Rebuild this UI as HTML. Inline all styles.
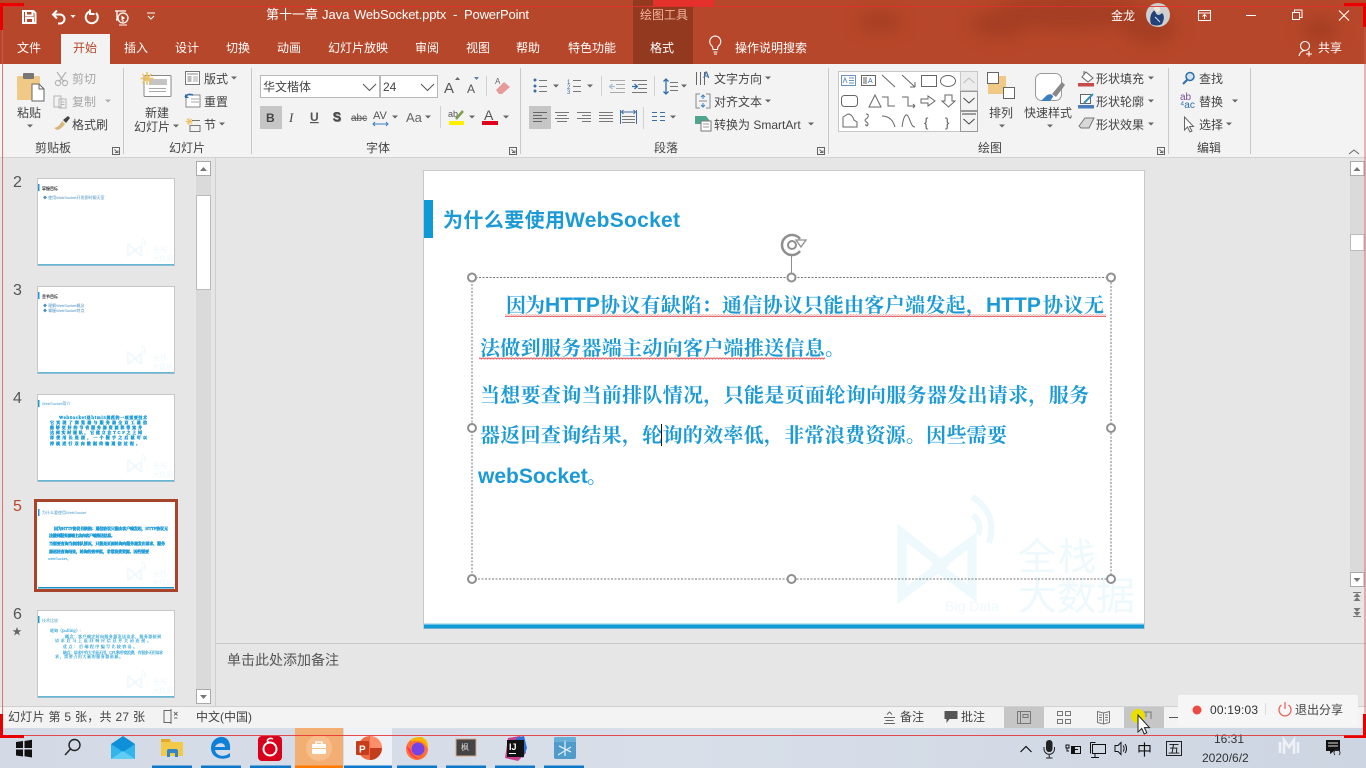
<!DOCTYPE html>
<html><head><meta charset="utf-8"><title>PowerPoint</title>
<style>
html,body{margin:0;padding:0;width:1366px;height:768px;overflow:hidden;background:#e6e6e6}
svg{display:block;filter:blur(.3px)}
text{font-family:"Liberation Sans","Noto Sans CJK SC",sans-serif;font-size:12px;fill:#444}
.w{fill:#fff}.g{fill:#a6a6a6}.d{fill:#444}
.ico{fill:none;stroke:#666;stroke-width:1}
.wi{fill:none;stroke:#fff;stroke-width:2}
.k{font-family:"Liberation Sans","Noto Serif CJK SC",serif;font-weight:700;font-size:20px;fill:#1b9ad6}
.b{font-weight:700;font-size:21px;fill:#1b9ad6}
.tk{font-family:"Noto Serif CJK SC",serif;font-size:4px;font-weight:700;fill:#1b9ad6;stroke:#1b9ad6;stroke-width:.35}
.tl{font-family:"Noto Serif CJK SC",serif;font-size:4px;fill:#1b9ad6;stroke:#1b9ad6;stroke-width:.12}
.num{font-size:16px;fill:#555}
</style></head><body>
<svg width="1366" height="768" viewBox="0 0 1366 768" xmlns="http://www.w3.org/2000/svg">
<defs>
<path id="ar" d="M-3-1.5h6L0 1.5z" fill="#666"/>
<filter id="bl" x="-30%" y="-60%" width="160%" height="220%"><feGaussianBlur stdDeviation="8"/></filter>
<pattern id="wv" width="3" height="3" patternUnits="userSpaceOnUse"><path d="M0 2.200L.75 .8 1.500 2.200 2.250 .8 3 2.200" fill="none" stroke="#e2484f" stroke-width=".6"/></pattern>
<linearGradient id="tb" x1="0" y1="0" x2="1" y2="0"><stop offset="0" stop-color="#d3dae6"/><stop offset=".5" stop-color="#d8dfe9"/><stop offset="1" stop-color="#cdd5e2"/></linearGradient>
<g id="lg"><path d="M5 6L45 38 5 68z" fill="none" stroke="#eef9fd" stroke-width="9"/><path d="M75 14V66L40 40z" fill="none" stroke="#eef9fd" stroke-width="9"/><path d="M75-30C92-20 98-5 92 16M76-12c6 5 8 12 5 20" fill="none" stroke="#eef9fd" stroke-width="6"/></g>
</defs>

<!-- backgrounds -->
<rect width="1366" height="768" fill="#e6e6e6"/>
<rect width="1366" height="64" fill="#b7472a"/>
<g filter="url(#bl)" fill="#97391f" opacity=".55">
<ellipse cx="1070" cy="12" rx="75" ry="18"/><ellipse cx="1000" cy="24" rx="30" ry="14"/><ellipse cx="1150" cy="28" rx="28" ry="16"/><ellipse cx="1320" cy="30" rx="18" ry="13"/><ellipse cx="880" cy="22" rx="22" ry="10"/>
</g>
<rect x="633" width="60" height="64" fill="#93391f"/>
<rect y="64" width="1366" height="93" fill="#f3f3f3"/>
<rect y="157" width="1366" height="1" fill="#d2d2d2"/>
<rect x="61" y="34" width="49" height="31" fill="#f3f3f3"/>

<!-- QAT -->
<path class="wi" d="M23 11h10.500l2 2v10H23zM26 11v4.500h6.500V11M26 23v-5h7v5"/>
<path class="wi" d="M57 10.500l-4 4 4 4M53 14.500h7a4.500 4.500 0 0 1 0 9h-2"/>
<path d="M70.500 15h5l-2.500 3z" fill="#fff"/>
<path class="wi" d="M90 11.500a6 6 0 1 0 6 1.500M90 9.500v4.500h4.500"/>
<path d="M115 11h11M117 11v9h-1M124 21h-2" fill="none" stroke="#fff" stroke-width="1.300"/><circle cx="123" cy="18" r="5" fill="none" stroke="#fff" stroke-width="1.300"/><path d="M121.500 15.500l3.500 2.500-3.500 2.500z" fill="#fff"/><path d="M119 25h8" stroke="#fff"/>
<path d="M147 13h8M148 16l3 3 3-3" fill="none" stroke="#fff"/>
<text class="w" x="266" y="19" style="font-size:13px">第十一章</text>
<text class="w" x="322" y="19" style="font-size:13px">Java</text>
<text class="w" x="354" y="19" style="font-size:13px" textLength="175" xml:space="preserve">WebSocket.pptx  -  PowerPoint</text>
<text x="640" y="19" style="font-size:12px;fill:#f2b49d">绘图工具</text>

<!-- Tabs -->
<g class="tabs">
<text class="w" x="17" y="52">文件</text><text x="73" y="52" style="fill:#b7472a">开始</text>
<text class="w" x="124" y="52">插入</text><text class="w" x="175" y="52">设计</text><text class="w" x="226" y="52">切换</text><text class="w" x="277" y="52">动画</text>
<text class="w" x="328" y="52">幻灯片放映</text><text class="w" x="415" y="52">审阅</text><text class="w" x="466" y="52">视图</text><text class="w" x="516" y="52">帮助</text>
<text class="w" x="568" y="52">特色功能</text><text class="w" x="650" y="52">格式</text><text class="w" x="735" y="52">操作说明搜索</text>
<text class="w" x="1318" y="52">共享</text>
</g>
<path d="M712 46a5.500 5.500 0 1 1 6.500 0c-.8.8-1 2-1 3.500h-4.500c0-1.500-.3-2.700-1-3.500zM713.500 52h4M714 54h3" fill="none" stroke="#fff" stroke-width="1.100"/>
<circle cx="1305" cy="46" r="4.500" fill="none" stroke="#fff" stroke-width="1.100"/><path d="M1299 56c1-4 3-5.500 6-5.500M1309 51v5.500M1306 54h6" fill="none" stroke="#fff" stroke-width="1.100"/>

<!-- Title right -->
<text class="w" x="1111" y="20">金龙</text>
<circle cx="1158" cy="15" r="12" fill="#cfcfcf"/><path d="M1151 24c-2-6 0-12 4-14 1 6 4 6 7 3 3 3 2 7 0 11-3 2-8 2-11 0z" fill="#21427a"/><circle cx="1157" cy="9" r="3" fill="#efe6d8"/><path d="M1155 17l5 5" stroke="#dfe6ef"/>
<rect x="1198.500" y="10.500" width="12" height="10" fill="none" stroke="#fff"/><path d="M1198.500 13h12M1204.500 19v-4M1202.500 16.500l2-2 2 2" fill="none" stroke="#fff"/>
<path d="M1246 15.500h10" stroke="#fff"/>
<path d="M1292.500 12.500h7v7h-7zM1294.500 12.500v-2.500h7.500v7.500h-2.500" fill="none" stroke="#fff"/>
<path d="M1339 10.500l10 10M1349 10.500l-10 10" stroke="#fff" stroke-width="1.100"/>

<!-- ribbon separators -->
<path d="M123.500 68v86M251.500 68v86M520.500 68v86M828.500 68v86M1168.500 68v86M1250.500 68v86" stroke="#c8c8c8"/>
<!-- group labels -->
<text x="35" y="152">剪贴板</text><text x="169" y="152">幻灯片</text><text x="366" y="152">字体</text><text x="654" y="152">段落</text><text x="978" y="152">绘图</text><text x="1197" y="152">编辑</text>
<path class="ico" d="M112.500 147.500h7v7h-7zM114.500 149.500l3 3M115 152.500h3v-2"/><path class="ico" d="M509.500 147.500h7v7h-7zM511.500 149.500l3 3M512 152.500h3v-2"/><path class="ico" d="M817.500 147.500h7v7h-7zM819.500 149.500l3 3M820 152.500h3v-2"/><path class="ico" d="M1157.500 147.500h7v7h-7zM1159.500 149.500l3 3M1160 152.500h3v-2"/>
<path d="M1349 154l5-4 5 4" fill="none" stroke="#666"/>

<!-- Clipboard -->
<rect x="17" y="76" width="23" height="24" rx="1" fill="#f0c987"/><rect x="23" y="73" width="11" height="6" rx="1" fill="#777"/>
<path d="M32 84h7l5 5v12H32z" fill="#fff" stroke="#666"/><path d="M39 84v5h5" fill="none" stroke="#666"/>
<text x="17" y="117" class="d">粘贴</text><use href="#ar" x="30" y="126"/>
<path d="M57 72l7 10M66 72l-7 10" stroke="#b5b5b5" stroke-width="1.300"/><circle cx="58" cy="83" r="2.600" fill="none" stroke="#b5b5b5" stroke-width="1.200"/><circle cx="65" cy="83" r="2.600" fill="none" stroke="#b5b5b5" stroke-width="1.200"/>
<text class="g" x="72" y="83">剪切</text>
<path d="M54 96h7v11h-7zM59 99h7v9h-7z" fill="#f3f3f3" stroke="#b5b5b5"/><path d="M61 102h3.500M61 104.500h3.500" stroke="#b5b5b5"/>
<text class="g" x="72" y="106">复制</text><use href="#ar" x="108" y="101" style="opacity:.5"/>
<path d="M54 128c4-1 6-3 8-7l3 3c-3 4-6 6-8 6z" fill="#d8b777"/><path d="M63 120l5-4 2 2-4 5z" fill="#444"/>
<text class="d" x="72" y="129">格式刷</text>

<!-- Slides group -->
<rect x="144" y="75.500" width="27" height="21" rx="1" fill="#fff" stroke="#888"/><rect x="149" y="79" width="18" height="6" fill="#c4c4c4"/><path d="M149 88.500h17M149 91.500h17" stroke="#aaa"/>
<path d="M147 72v13M140.500 78.500h13M142.500 74l9 9M151.500 74l-9 9" stroke="#f0c060" stroke-width="1.500"/>
<text class="d" x="145" y="117">新建</text><text class="d" x="134" y="131">幻灯片</text><use href="#ar" x="176" y="126"/>
<rect x="185.500" y="71.500" width="14" height="13" fill="#fff" stroke="#777"/><path d="M187 74h11" stroke="#888"/><rect x="187.500" y="76" width="4" height="6" fill="#bbb"/><path d="M193 77h5M193 79h5M193 81h5" stroke="#aaa"/>
<text class="d" x="204" y="83">版式</text><use href="#ar" x="234" y="78"/>
<rect x="186" y="95" width="14" height="12" fill="#fff" stroke="#888"/><path d="M191 99h8M191 102h8" stroke="#aaa"/><path d="M185 97c2-3 5-3 8-2" fill="none" stroke="#2f6ea8" stroke-width="1.600"/><path d="M185 94v4h4z" fill="#2f6ea8"/>
<text class="d" x="204" y="106">重置</text>
<path d="M189 118v7M185.500 121.500h7M187 119l5 5M192 119l-5 5" stroke="#f0c060" stroke-width="1.100"/><path d="M192 120.500h8M190 125.500h10v6h-10z" fill="none" stroke="#777"/>
<text class="d" x="204" y="129">节</text><use href="#ar" x="222" y="124"/>

<!-- Font -->
<rect x="260.500" y="75.500" width="119" height="22" fill="#fff" stroke="#b8b8b8"/><rect x="380.500" y="75.500" width="57" height="22" fill="#fff" stroke="#b8b8b8"/>
<text class="d" x="263" y="91">华文楷体</text><text class="d" x="383" y="91">24</text>
<path d="M363 84l6.500 6.500 6.500-6.500M421 84l6.500 6.500 6.500-6.500" fill="none" stroke="#555"/>
<text x="444" y="93" style="font-size:15px;fill:#555">A</text><path d="M455 80h5l-2.500-3z" fill="#666"/>
<text x="467" y="93" style="font-size:12px;fill:#555">A</text><path d="M474 77h5l-2.500 3z" fill="#5a7fa6"/>
<path d="M486.500 76v20" stroke="#d0d0d0"/>
<path d="M496 90l8-8 6 5-8 7h-3z" fill="#e79a9a"/><text x="495" y="84" style="font-size:8px;fill:#666">A</text>
<rect x="260" y="106" width="22" height="23" fill="#c6c6c6"/>
<text x="266" y="122" style="font-size:12px;font-weight:700;fill:#444">B</text>
<text x="289" y="122" style="font-size:13px;font-style:italic;font-family:'Liberation Serif',serif;fill:#444">I</text>
<text x="310" y="121" style="font-size:12px;font-weight:700;fill:#555;text-decoration:underline">U</text>
<text x="333" y="122" style="font-size:13px;font-weight:700;fill:#777">S</text><text x="332.500" y="121" style="font-size:13px;font-weight:700;fill:#444">S</text>
<text x="351" y="121" style="font-size:10px;fill:#555;text-decoration:line-through">abc</text>
<text x="373" y="119" style="font-size:11px;fill:#555">AV</text><path d="M373 124h15M375 122l-2 2 2 2M386 122l2 2-2 2" fill="none" stroke="#3a7fc0"/><use href="#ar" x="395" y="117"/>
<text x="406" y="122" style="font-size:13px;fill:#666">Aa</text><use href="#ar" x="428" y="117"/>
<path d="M440.500 106v22" stroke="#d0d0d0"/>
<text x="448" y="117" style="font-size:9px;fill:#555">ab</text><path d="M456 119l7-8" stroke="#7fa04f" stroke-width="2.500"/><rect x="449" y="121" width="15" height="4" fill="#fff000"/><use href="#ar" x="472" y="117"/>
<text x="484" y="120" style="font-size:14px;fill:#555">A</text><rect x="482" y="121" width="16" height="4" fill="#e0001b"/><use href="#ar" x="506" y="117"/>

<!-- Paragraph -->
<g fill="#3a6ea5"><circle cx="535" cy="80" r="1.500"/><circle cx="535" cy="86" r="1.500"/><circle cx="535" cy="91" r="1.500"/></g>
<path d="M539 80.500h8M539 86.500h8M539 91.500h8M573 80.500h8M573 86.500h8M573 91.500h8" stroke="#777"/><use href="#ar" x="556" y="86"/><use href="#ar" x="590" y="86"/>
<text x="567" y="84" style="font-size:6px;fill:#3a6ea5">1</text><text x="567" y="89" style="font-size:6px;fill:#3a6ea5">2</text><text x="567" y="94" style="font-size:6px;fill:#3a6ea5">3</text>
<path d="M601.500 76v20M654.500 76v20M643.500 107v22" stroke="#d0d0d0"/>
<path d="M610 80.500h15M616 84.500h9M616 88.500h9M610 92.500h15" stroke="#aaa"/><path d="M615 86.500h-5M612.500 84l-3 2.500 3 2.500" fill="none" stroke="#a8bdd3" stroke-width="1.200"/>
<path d="M632 80.500h15M638 84.500h9M638 88.500h9M632 92.500h15" stroke="#777"/><path d="M632 86.500h5M634.500 84l3 2.500-3 2.500" fill="none" stroke="#2f6ea8" stroke-width="1.200"/>
<path d="M666 79v15M663.500 81.500l2.500-2.500 2.500 2.500M663.500 91.500l2.500 2.500 2.500-2.500" fill="none" stroke="#2f6ea8" stroke-width="1.300"/><path d="M670 82.500h8M670 86.500h8M670 90.500h8" stroke="#777"/><use href="#ar" x="684" y="86"/>
<path d="M696.500 72v13M700.500 72v13M704.500 72v13" stroke="#666"/><text x="703" y="78" style="font-size:9px;font-weight:700;fill:#3a6ea5">A</text>
<text class="d" x="714" y="83">文字方向</text><use href="#ar" x="768" y="78"/>
<path d="M700 94h-4v14h4M706 94h4v14h-4" fill="none" stroke="#888"/><path d="M703 95v4M701 97l2-2 2 2M703 107v-4M701 105l2 2 2-2" fill="none" stroke="#3a7fc0"/><path d="M699 101h8" stroke="#888"/>
<text class="d" x="714" y="106">对齐文本</text><use href="#ar" x="768" y="101"/>
<path d="M695 116h11l4 5h-8v3h-7z" fill="#4fa58e"/><rect x="701" y="121" width="10" height="10" fill="#fff" stroke="#777"/><path d="M703 124h6M703 127h6" stroke="#999"/>
<text class="d" x="714" y="129">转换为 SmartArt</text><use href="#ar" x="811" y="124"/>
<rect x="529" y="106" width="22" height="23" fill="#c6c6c6"/>
<path d="M533 112.500h14M533 115.500h9M533 118.500h14M533 121.500h9" stroke="#666"/>
<path d="M555 112.500h14M557 115.500h10M555 118.500h14M557 121.500h10" stroke="#777"/>
<path d="M577 112.500h14M582 115.500h9M577 118.500h14M582 121.500h9" stroke="#777"/>
<path d="M599 112.500h14M599 115.500h14M599 118.500h14M599 121.500h14" stroke="#777"/>
<path d="M620.500 110v14M636.500 110v14" stroke="#3a6ea5"/><path d="M622 112h13M623.500 110l-2 2 2 2M633.500 110l2 2-2 2" fill="none" stroke="#3a6ea5"/><path d="M622 116.500h13M622 119.500h13M622 122.500h13" stroke="#777"/>
<path d="M652 112.500h5M660 112.500h5M652 116.500h5M660 116.500h5M652 120.500h5M660 120.500h5" stroke="#3a6ea5"/><use href="#ar" x="673" y="117"/>

<!-- Shapes gallery -->
<rect x="838.500" y="71.500" width="139" height="60" fill="#fff" stroke="#c8c8c8"/>
<g fill="none" stroke="#666">
<rect x="841.500" y="75.500" width="14" height="10" stroke="#6a93c0"/><path d="M849 78h5M849 80.500h5M849 83h5M843 83l2-5 2 5" stroke="#6a93c0"/>
<rect x="861.500" y="75.500" width="14" height="10"/><path d="M864 77v7M866 77v7"/><text x="868" y="83" style="font-size:7px;fill:#3a6ea5;stroke:none">A</text>
<path d="M882 75l13 12M902 75l13 12M915 87v-5M915 87h-5"/>
<rect x="921.500" y="75.500" width="15" height="11"/><ellipse cx="948" cy="81" rx="7.500" ry="5.500"/>
<rect x="841.500" y="95.500" width="16" height="11" rx="3"/><path d="M869 107l6-12 6 12z"/>
<path d="M882 97h6v9h7M902 97h6v9h7M915 106l-2-2M915 106l-2 2"/>
<path d="M921 99h7v-3l7 5-7 5v-3h-7z"/><path d="M945 95h7v6h3l-6.500 6-6.500-6h3z"/>
<path d="M843 127v-10l5-3c3 0 5 3 6 6l3 2v5z"/><path d="M866 114c3 0 3 3 0 5s2 3 2 5-3 3-2 0"/>
<path d="M882 116c7 0 11 4 13 11"/><path d="M902 127c2-14 5-14 7-9s3 9 6 9"/>
</g>
<text x="924" y="127" style="font-size:13px;fill:#555">{</text><text x="945" y="127" style="font-size:13px;fill:#555">}</text>
<rect x="960.500" y="71.500" width="17" height="19" fill="#ececec" stroke="#c8c8c8"/><path d="M963.500 83l5.500-5 5.500 5" fill="none" stroke="#bbb"/>
<rect x="960.500" y="91.500" width="17" height="19" fill="#f3f3f3" stroke="#999"/><path d="M963.500 98l5.500 5 5.500-5" fill="none" stroke="#444"/>
<rect x="960.500" y="111.500" width="17" height="20" fill="#f3f3f3" stroke="#999"/><path d="M962 114h14" stroke="#444"/><path d="M963.500 119l5.500 5 5.500-5" fill="none" stroke="#444"/>

<!-- Arrange etc. -->
<rect x="988" y="76" width="18" height="18" fill="#f0c987"/><rect x="987.500" y="72.500" width="11" height="11" fill="#fff" stroke="#666"/><rect x="1003.500" y="87.500" width="11" height="11" fill="#fff" stroke="#666"/>
<text class="d" x="989" y="117">排列</text><use href="#ar" x="1002" y="126"/>
<rect x="1035.500" y="73.500" width="26" height="27" rx="6" fill="#fff" stroke="#999"/>
<path d="M1041 101l5-5c3-3 7-2 7 1l-3 4z" fill="#3a7fc0"/><path d="M1052 94l10-12 3 3-9 12z" fill="#888"/>
<text class="d" x="1024" y="117">快速样式</text><use href="#ar" x="1050" y="126"/>
<rect x="1078" y="83" width="16" height="3.500" fill="#c74b4b"/><path d="M1086 72l7 6-5 4-6-5z" fill="#fff" stroke="#666"/><path d="M1084 74v-3" stroke="#666"/>
<text class="d" x="1096" y="83">形状填充</text><use href="#ar" x="1151" y="78"/>
<rect x="1078" y="105" width="16" height="3.500" fill="#4a7ebb"/><rect x="1080.500" y="94.500" width="10" height="9" fill="#fff" stroke="#666"/><path d="M1084 103l9-9" stroke="#3a8fc0" stroke-width="2"/>
<text class="d" x="1096" y="106">形状轮廓</text><use href="#ar" x="1151" y="101"/>
<path d="M1079 126l6-8h9l-5 10h-8z" fill="#d8d8d8" stroke="#777"/>
<text class="d" x="1096" y="129">形状效果</text><use href="#ar" x="1151" y="124"/>
<!-- Editing -->
<circle cx="1190" cy="76.500" r="4" fill="#cfe3f5" stroke="#2f6ea8" stroke-width="1.500"/><path d="M1187 80l-4 4" stroke="#2f6ea8" stroke-width="2"/>
<text class="d" x="1199" y="83">查找</text>
<text x="1180" y="100" style="font-size:10px;fill:#7a4fa0">ab</text><text x="1180" y="108" style="font-size:10px;fill:#2f6ea8">⁴ac</text>
<text class="d" x="1199" y="106">替换</text><use href="#ar" x="1235" y="101"/>
<path d="M1184.500 117v13l3-3 2.500 5 2-1-2.500-4.500h4z" fill="#fff" stroke="#666"/>
<text class="d" x="1199" y="129">选择</text><use href="#ar" x="1229" y="124"/>

<!-- Left pane -->
<path d="M215.500 158v549" stroke="#cfcfcf"/>
<rect x="196" y="161" width="15" height="543" fill="#dadada"/>
<rect x="196.500" y="161.500" width="14" height="14" fill="#fff" stroke="#aaa"/><path d="M200 171h7l-3.500-4z" fill="#777"/>
<rect x="196.500" y="195.500" width="14" height="94" fill="#fff" stroke="#bbb"/>
<rect x="196.500" y="689.500" width="14" height="14" fill="#fff" stroke="#aaa"/><path d="M200 695h7l-3.500 4z" fill="#777"/>

<text class="num" x="13" y="187">2</text><text class="num" x="13" y="295">3</text><text class="num" x="13" y="403">4</text><text class="num" x="13" y="511" style="fill:#b7472a">5</text><text class="num" x="13" y="619">6</text>
<path d="M17 627l1.200 3.200h3.300l-2.700 2 1 3.300-2.800-2-2.800 2 1-3.300-2.700-2h3.300z" fill="#666"/>

<!-- Thumb 2 -->
<rect x="37.500" y="178.500" width="137" height="87" fill="#fff" stroke="#c6c6c6"/><rect x="38" y="184" width="1.500" height="7" fill="#1b9ad6"/><rect x="38" y="264" width="136" height="1.500" fill="#63b6d6"/>
<text x="42" y="190" style="font-size:4px;font-weight:700;fill:#333">掌握目标</text><text x="43" y="199" style="font-size:4px;fill:#4a90c0">◆ 使用WebSocket开发即时聊天室</text>
<use href="#lg" transform="translate(127,243) scale(.19)"/><text x="153" y="252" style="font-size:7px;fill:#eef9fd">全栈</text><text x="152" y="261" style="font-size:7px;fill:#eef9fd">大数据</text>
<!-- Thumb 3 -->
<rect x="37.500" y="286.500" width="137" height="87" fill="#fff" stroke="#c6c6c6"/><rect x="38" y="292" width="1.500" height="7" fill="#1b9ad6"/><rect x="38" y="372" width="136" height="1.500" fill="#63b6d6"/>
<text x="42" y="298" style="font-size:4px;font-weight:700;fill:#333">章节目标</text><text x="43" y="307" style="font-size:4px;fill:#4a90c0">◆ 理解WebSocket概念</text><text x="43" y="312" style="font-size:4px;fill:#4a90c0">◆ 掌握WebSocket特点</text>
<use href="#lg" transform="translate(127,351) scale(.19)"/><text x="153" y="360" style="font-size:7px;fill:#eef9fd">全栈</text><text x="152" y="369" style="font-size:7px;fill:#eef9fd">大数据</text>
<!-- Thumb 4 -->
<rect x="37.500" y="394.500" width="137" height="87" fill="#fff" stroke="#c6c6c6"/><rect x="38" y="400" width="1.500" height="7" fill="#1b9ad6"/><rect x="38" y="480" width="136" height="1.500" fill="#63b6d6"/>
<text x="42" y="405" style="font-size:4px;fill:#4a9ac8">WebSocket简介</text>
<text class="tk" x="59" y="419" textLength="88">WebSocket是html5规范的一项重要技术</text>
<text class="tk" x="50" y="424" textLength="97">它实现了浏览器与服务器全双工通信</text>
<text class="tk" x="50" y="429" textLength="92">能够更好的节省服务器资源和带宽并</text>
<text class="tk" x="50" y="434" textLength="92">达到实时通讯，它建立在TCP之上同</text>
<text class="tk" x="50" y="439" textLength="97">样使用长连接，一个握手之后就可以</text>
<text class="tk" x="50" y="445" textLength="90">持续进行双向数据传输通信过程。</text>
<use href="#lg" transform="translate(127,459) scale(.19)"/><text x="153" y="468" style="font-size:7px;fill:#eef9fd">全栈</text><text x="152" y="477" style="font-size:7px;fill:#eef9fd">大数据</text>
<!-- Thumb 5 -->
<rect x="35.500" y="500.500" width="141" height="90" fill="#fff" stroke="#a8442a" stroke-width="3"/><rect x="38" y="509" width="1.500" height="7" fill="#1b9ad6"/><rect x="38" y="587" width="136" height="1.500" fill="#1b8ec6"/>
<text x="42" y="514" style="font-size:4px;fill:#4a9ac8">为什么要使用WebSocket</text>
<text class="tk" x="54" y="530" textLength="114">因为HTTP协议有缺陷：通信协议只能由客户端发起，HTTP协议无</text>
<text class="tk" x="49" y="537" textLength="66">法做到服务器端主动向客户端推送信息。</text>
<text class="tk" x="49" y="545" textLength="116">当想要查询当前排队情况，只能是页面轮询向服务器发出请求，服务</text>
<text class="tk" x="49" y="553" textLength="100">器返回查询结果，轮询的效率低，非常浪费资源。因些需要</text>
<text x="48" y="560" style="font-size:4px;fill:#1b9ad6" textLength="23">webSocket。</text>
<use href="#lg" transform="translate(127,567) scale(.19)"/><text x="153" y="576" style="font-size:7px;fill:#eef9fd">全栈</text><text x="152" y="585" style="font-size:7px;fill:#eef9fd">大数据</text>
<!-- Thumb 6 -->
<rect x="37.500" y="610.500" width="137" height="87" fill="#fff" stroke="#c6c6c6"/><rect x="38" y="616" width="1.500" height="7" fill="#1b9ad6"/><rect x="38" y="696" width="136" height="1.500" fill="#63b6d6"/>
<text x="42" y="622" style="font-size:4px;fill:#4a9ac8">技术比较</text>
<text class="tl" x="50" y="632">轮询（polling）：</text>
<text class="tl" x="65" y="638" textLength="96">概念：客户端定时向服务器发送请求，服务器接到</text>
<text class="tl" x="55" y="642" textLength="96">请求后马上返回响应信息并关闭连接。</text>
<text class="tl" x="63" y="648" textLength="74">优点：后端程序编写比较容易。</text>
<text class="tl" x="63" y="654" textLength="100">缺点：请求中有大半是无用，CPU和带宽浪费，有很多无用请求</text>
<text class="tl" x="55" y="658" textLength="68">求，需要占用大量的服务器资源。</text>
<use href="#lg" transform="translate(127,675) scale(.19)"/><text x="153" y="684" style="font-size:7px;fill:#eef9fd">全栈</text><text x="152" y="693" style="font-size:7px;fill:#eef9fd">大数据</text>

<!-- Slide -->
<rect x="423.500" y="170.500" width="721" height="458" fill="#fff" stroke="#c9c9c9"/>
<rect x="424" y="200" width="9" height="38" fill="#0f9ad5"/>
<rect x="424" y="623" width="720" height="1.500" fill="#bfe4f5"/><rect x="424" y="624.500" width="720" height="4" fill="#0f9ad5"/>
<text x="443" y="227" textLength="122" style="font-size:20px;font-weight:700;fill:#1b9ad6">为什么要使用</text>
<text x="565" y="227" textLength="115" style="font-size:21px;font-weight:700;fill:#1b9ad6">WebSocket</text>

<!-- watermark -->
<use href="#lg" transform="translate(897,527)"/>
<text x="1018" y="570" style="font-size:38px;fill:#eef9fd" textLength="78">全栈</text>
<text x="1018" y="610" style="font-size:39px;fill:#eef9fd" textLength="117">大数据</text>
<text x="945" y="611" style="font-size:14px;fill:#eef9fd">Big Data</text>

<!-- body text -->
<text class="k" x="506" y="312" textLength="39">因为</text><text class="b" x="545" y="312">HTTP</text>
<text class="k" x="600" y="312" textLength="386">协议有缺陷：通信协议只能由客户端发起，</text><text class="b" x="986" y="312">HTTP</text><text class="k" x="1043" y="312" textLength="61">协议无</text>
<text class="k" x="480" y="355" textLength="365">法做到服务器端主动向客户端推送信息。</text>
<text class="k" x="480" y="402" textLength="609">当想要查询当前排队情况，只能是页面轮询向服务器发出请求，服务</text>
<text class="k" x="480" y="442" textLength="527">器返回查询结果，轮询的效率低，非常浪费资源。因些需要</text>
<text class="b" x="478" y="483">webSocket</text><text class="k" x="587" y="483">。</text>
<rect x="505" y="314" width="601" height="3" fill="url(#wv)"/><rect x="479" y="357" width="346" height="3" fill="url(#wv)"/>
<path d="M661.500 424v22" stroke="#111"/>

<!-- selection -->
<rect x="472" y="277.500" width="639" height="301.500" fill="none" stroke="#777" stroke-dasharray="2 1.500"/>
<path d="M791.500 256v21" stroke="#8f8f8f"/>
<g fill="#fff" stroke="#8f8f8f" stroke-width="2">
<circle cx="472" cy="277.500" r="4"/><circle cx="791.500" cy="277.500" r="4"/><circle cx="1111" cy="277.500" r="4"/>
<circle cx="472" cy="428" r="4"/><circle cx="1111" cy="428" r="4"/>
<circle cx="472" cy="579" r="4"/><circle cx="791.500" cy="579" r="4"/><circle cx="1111" cy="579" r="4"/>
</g>
<path d="M800 239a10 10 0 1 0 0 12" fill="none" stroke="#8f8f8f" stroke-width="2.500"/><circle cx="792" cy="245" r="4" fill="none" stroke="#8f8f8f" stroke-width="2"/><path d="M796 240h10l-5 7z" fill="#fff" stroke="#8f8f8f" stroke-width="1.300"/>

<!-- right scrollbar -->
<rect x="1350" y="161" width="15" height="411" fill="#dadada"/>
<rect x="1350.500" y="161.500" width="13.500" height="14" fill="#fff" stroke="#aaa"/><path d="M1353.500 171h7l-3.500-4z" fill="#777"/>
<rect x="1350.500" y="234.500" width="13.500" height="16" fill="#fff" stroke="#bbb"/>
<rect x="1350.500" y="572.500" width="13.500" height="14" fill="#fff" stroke="#aaa"/><path d="M1353.500 578h7l-3.500 4z" fill="#777"/>
<path d="M1353.500 597h7l-3.500-4zM1353.500 601h7l-3.500-4zM1353.500 608h7l-3.500 4zM1353.500 612h7l-3.500 4z" fill="#777"/><path d="M1353 592.500h8M1353 616.500h8" stroke="#777"/>

<!-- notes -->
<rect x="216" y="643" width="1150" height="1" fill="#c8c8c8"/>
<text x="227" y="665" style="font-size:14px;fill:#555">单击此处添加备注</text>

<!-- status bar -->
<rect y="707" width="1366" height="21" fill="#f3f3f3"/><rect y="706" width="1366" height="1" fill="#d0d0d0"/>
<text x="8" y="721" textLength="137" style="fill:#444">幻灯片 第 5 张，共 27 张</text>
<path d="M171 710.500h-7v12h7M171 709v15" fill="none" stroke="#666"/><path d="M174 712l3.500 3.500M177.500 712l-3.500 3.500M174 718h3.500" stroke="#666"/>
<text x="196" y="721" textLength="56">中文(中国)</text>
<path d="M884 717.500h11M885.500 720.500h8M884 723.500h11M887 714.500l2.500-2.500 2.500 2.500" fill="none" stroke="#666"/>
<text x="900" y="721">备注</text>
<path d="M944.500 711h13v8h-8l-3 4v-4h-2z" fill="#555"/>
<text x="961" y="721">批注</text>
<rect x="1004" y="707" width="40" height="21" fill="#c6c6c6"/><rect x="1124" y="707" width="40" height="21" fill="#c6c6c6"/>
<rect x="1017.500" y="711.500" width="13" height="12" fill="none" stroke="#777"/><path d="M1020.500 711.500v12M1023 714.500h5v3h-5z" fill="none" stroke="#777"/>
<rect x="1057.500" y="711.500" width="5" height="4" fill="none" stroke="#777"/><rect x="1065.500" y="711.500" width="5" height="4" fill="none" stroke="#777"/><rect x="1057.500" y="719.500" width="5" height="4" fill="none" stroke="#777"/><rect x="1065.500" y="719.500" width="5" height="4" fill="none" stroke="#777"/>
<path d="M1097.500 711.500l6 1.500 6-1.500v11l-6 1.500-6-1.500zM1103.500 713v11M1099 715h3M1099 717.500h3M1099 720h3M1105 715h3M1105 717.500h3M1105 720h3" fill="none" stroke="#777"/>
<path d="M1143 712h8v7M1146 712v5" fill="none" stroke="#777"/>
<path d="M1169 717.500h9" stroke="#555"/>
<rect x="1178" y="695" width="180" height="31" fill="#f6f6f6" rx="2"/>
<circle cx="1197" cy="710" r="4.500" fill="#ee4a43"/>
<text x="1210" y="714" style="fill:#333" textLength="48">00:19:03</text><path d="M1265.500 703v12" stroke="#ddd"/>
<path d="M1281.500 705a6 6 0 1 0 7 0M1285 702v7" fill="none" stroke="#e8655f" stroke-width="1.300"/>
<text x="1295" y="714" class="d">退出分享</text>

<!-- taskbar -->
<rect y="728" width="1366" height="40" fill="url(#tb)"/>
<rect x="295" y="728" width="48" height="40" fill="#f3ae73"/><rect x="295" y="765.500" width="48" height="2.500" fill="#ff7a00"/>
<rect x="344" y="728" width="48" height="40" fill="#eef1f5"/>
<g fill="#0d78c9"><rect x="152" y="765.500" width="40" height="2.500"/><rect x="201" y="765.500" width="40" height="2.500"/><rect x="250" y="765.500" width="41" height="2.500"/><rect x="344" y="765.500" width="48" height="2.500"/><rect x="397" y="765.500" width="40" height="2.500"/><rect x="446" y="765.500" width="40" height="2.500"/><rect x="495" y="765.500" width="40" height="2.500"/><rect x="544" y="765.500" width="40" height="2.500"/></g>
<path d="M16 742l7-1v7h-7zM24.500 741l7.500-1.200V748h-7.500zM16 749.500h7v7l-7-1zM24.500 749.500H32v8l-7.500-1.200z" fill="#111"/>
<circle cx="74.500" cy="745" r="5.500" fill="none" stroke="#222" stroke-width="1.400"/><path d="M70.500 749l-5.500 6" stroke="#222" stroke-width="1.400"/>
<path d="M111 744l12-8 12 8v15h-24z" fill="#0f8fd8"/><path d="M111 744l12 8 12-8v15h-24z" fill="#31b5ea"/><path d="M111 759l12-8 12 8z" fill="#62cdf2"/>
<path d="M161 739h9l2 3h11v14h-22z" fill="#f3c94a"/><path d="M161 739h9v3h-9z" fill="#e2a92c"/><path d="M167 757v-6a2 2 0 0 1 2-2h7a2 2 0 0 1 2 2v6h-3v-4h-5v4z" fill="#3186c9"/>
<path d="M230 750h-15c1 6 9 8 15 3v4c-8 4-19 1-19-9 0-6 4-10 9-11 7-1 11 5 10 13zm-5-3c0-5-8-5-10 0z" fill="#0f80d8"/>
<rect x="258" y="736" width="24" height="25" rx="4" fill="#d9001b"/><circle cx="270" cy="749" r="6.500" fill="none" stroke="#fff" stroke-width="2"/><path d="M269 742c-4-1 0-5 4-3" fill="none" stroke="#fff" stroke-width="1.500"/>
<circle cx="319" cy="748" r="13" fill="#f7bd8b"/><rect x="312" y="744" width="14" height="10" rx="1" fill="#fff"/><path d="M316 744v-2h6v2" fill="none" stroke="#fff" stroke-width="1.500"/><path d="M312 748.500h14" stroke="#f7bd8b"/>
<circle cx="370" cy="748" r="12" fill="#ed6c47"/><path d="M370 748v-12a12 12 0 0 1 12 12z" fill="#ff8f6b"/><path d="M370 748h12a12 12 0 0 1-12 12z" fill="#c43e1c"/><rect x="356" y="741" width="13" height="14" rx="1" fill="#c43e1c"/><text x="359" y="752.500" style="font-size:10px;font-weight:700;fill:#fff">P</text>
<circle cx="417" cy="749" r="11" fill="#ff7139"/><circle cx="418" cy="749" r="6.500" fill="#7542e5"/><path d="M410 740c4-3 9-3 12-3l4 3c2 3 2 6 2 9-3-6-7-8-11-8s-5 1-7-1z" fill="#ffb300"/><path d="M407 746c1 8 7 13 13 13-6-2-9-6-9-9z" fill="#ff3750"/>
<rect x="456" y="739" width="20" height="17" fill="#444" stroke="#d5a98c"/><text x="461" y="750" style="font-size:8px;fill:#ddd">枫</text>
<path d="M505 758l3-20 12-2 4 3 2 14-8 8z" fill="#c93f8e"/><path d="M516 738l8-2 3 12-4 10-7-6z" fill="#2a6fd8"/><rect x="507" y="740" width="17" height="17" fill="#111"/><text x="509" y="750" style="font-size:9px;font-weight:700;fill:#fff">IJ</text><path d="M509 753.500h7" stroke="#fff"/>
<rect x="554" y="737" width="22" height="22" rx="2" fill="#4f9ccb"/><path d="M565 740v16M558 755l13-8M559 746l12 6" stroke="#dceaf4" stroke-width="1.300"/><rect x="554" y="737" width="22" height="5" fill="#79bbdf" opacity=".6"/>

<path d="M1020.500 752l5.500-5.500 5.500 5.500" fill="none" stroke="#111" stroke-width="1.200"/>
<rect x="1046" y="740" width="6.500" height="12" rx="3.200" fill="#222"/><path d="M1044 747v2a5 5 0 0 0 10.500 0v-2M1049.200 754v4M1046 758h6.500" fill="none" stroke="#222"/>
<path d="M1071.500 746.500h9v7h-9zM1069 745v3h-3v-3zM1067 748v3h2M1074 749.500h4" fill="none" stroke="#111"/><rect x="1072" y="747" width="3" height="6" fill="#111"/>
<path d="M1092.500 744.500h13v9h-13zM1090.500 742.500h5M1095 753.500v4M1091 757.500h8" fill="none" stroke="#111"/><path d="M1090.500 742.500v11" stroke="#111"/>
<path d="M1115 745.500h3l3-3v12l-3-3h-3zM1123 745.500c1.500 1.500 1.500 4.500 0 6M1125 744c2 2.500 2 6.500 0 9" fill="none" stroke="#111"/>
<text x="1137" y="755" style="font-size:15px;fill:#111">中</text>
<rect x="1166.500" y="741.500" width="15" height="14" fill="none" stroke="#222"/><text x="1168" y="753" style="font-size:12px;fill:#111">五</text>
<text x="1214" y="743" style="font-size:12px;fill:#333">16:31</text>
<text x="1202" y="762" style="font-size:12px;fill:#333">2020/6/2</text>
<path d="M1280 753v-11M1284 754v-14l5 7 5-7v14M1298 753v-11" fill="none" stroke="#eef2f7" stroke-width="2.500"/>
<path d="M1326 740h14v11h-6l-4 3v-3h-4z" fill="#111"/><path d="M1328 743h10M1328 746h10" stroke="#ddd"/><path d="M1335 755a3 3 0 1 1 4 0" fill="none" stroke="#333"/>

<!-- pointer -->
<circle cx="1138" cy="716" r="7" fill="#e8e000"/>
<path d="M1138 715v17l3.800-3.500 2.400 5.500 2.600-1.200-2.400-5.200h5z" fill="#fff" stroke="#222"/>

<!-- red capture frame -->
<g>
<path d="M0 6.500h1366M0 735.500h1366" stroke="#e52e2e" stroke-opacity=".85"/>
<path d="M2.500 6v729M1365 6v729" stroke="#dd5555" stroke-opacity=".8"/>
<path d="M0 3h24v3H3v24H0zM1344 3h22v24h-3V6h-19zM0 714h3v21h21v3H0zM1344 735.500h19V714h3v24h-22z" fill="#e80000"/>
<rect x="653" y="0" width="61" height="6" fill="#e6302b"/>
</g>
</svg>
</body></html>
